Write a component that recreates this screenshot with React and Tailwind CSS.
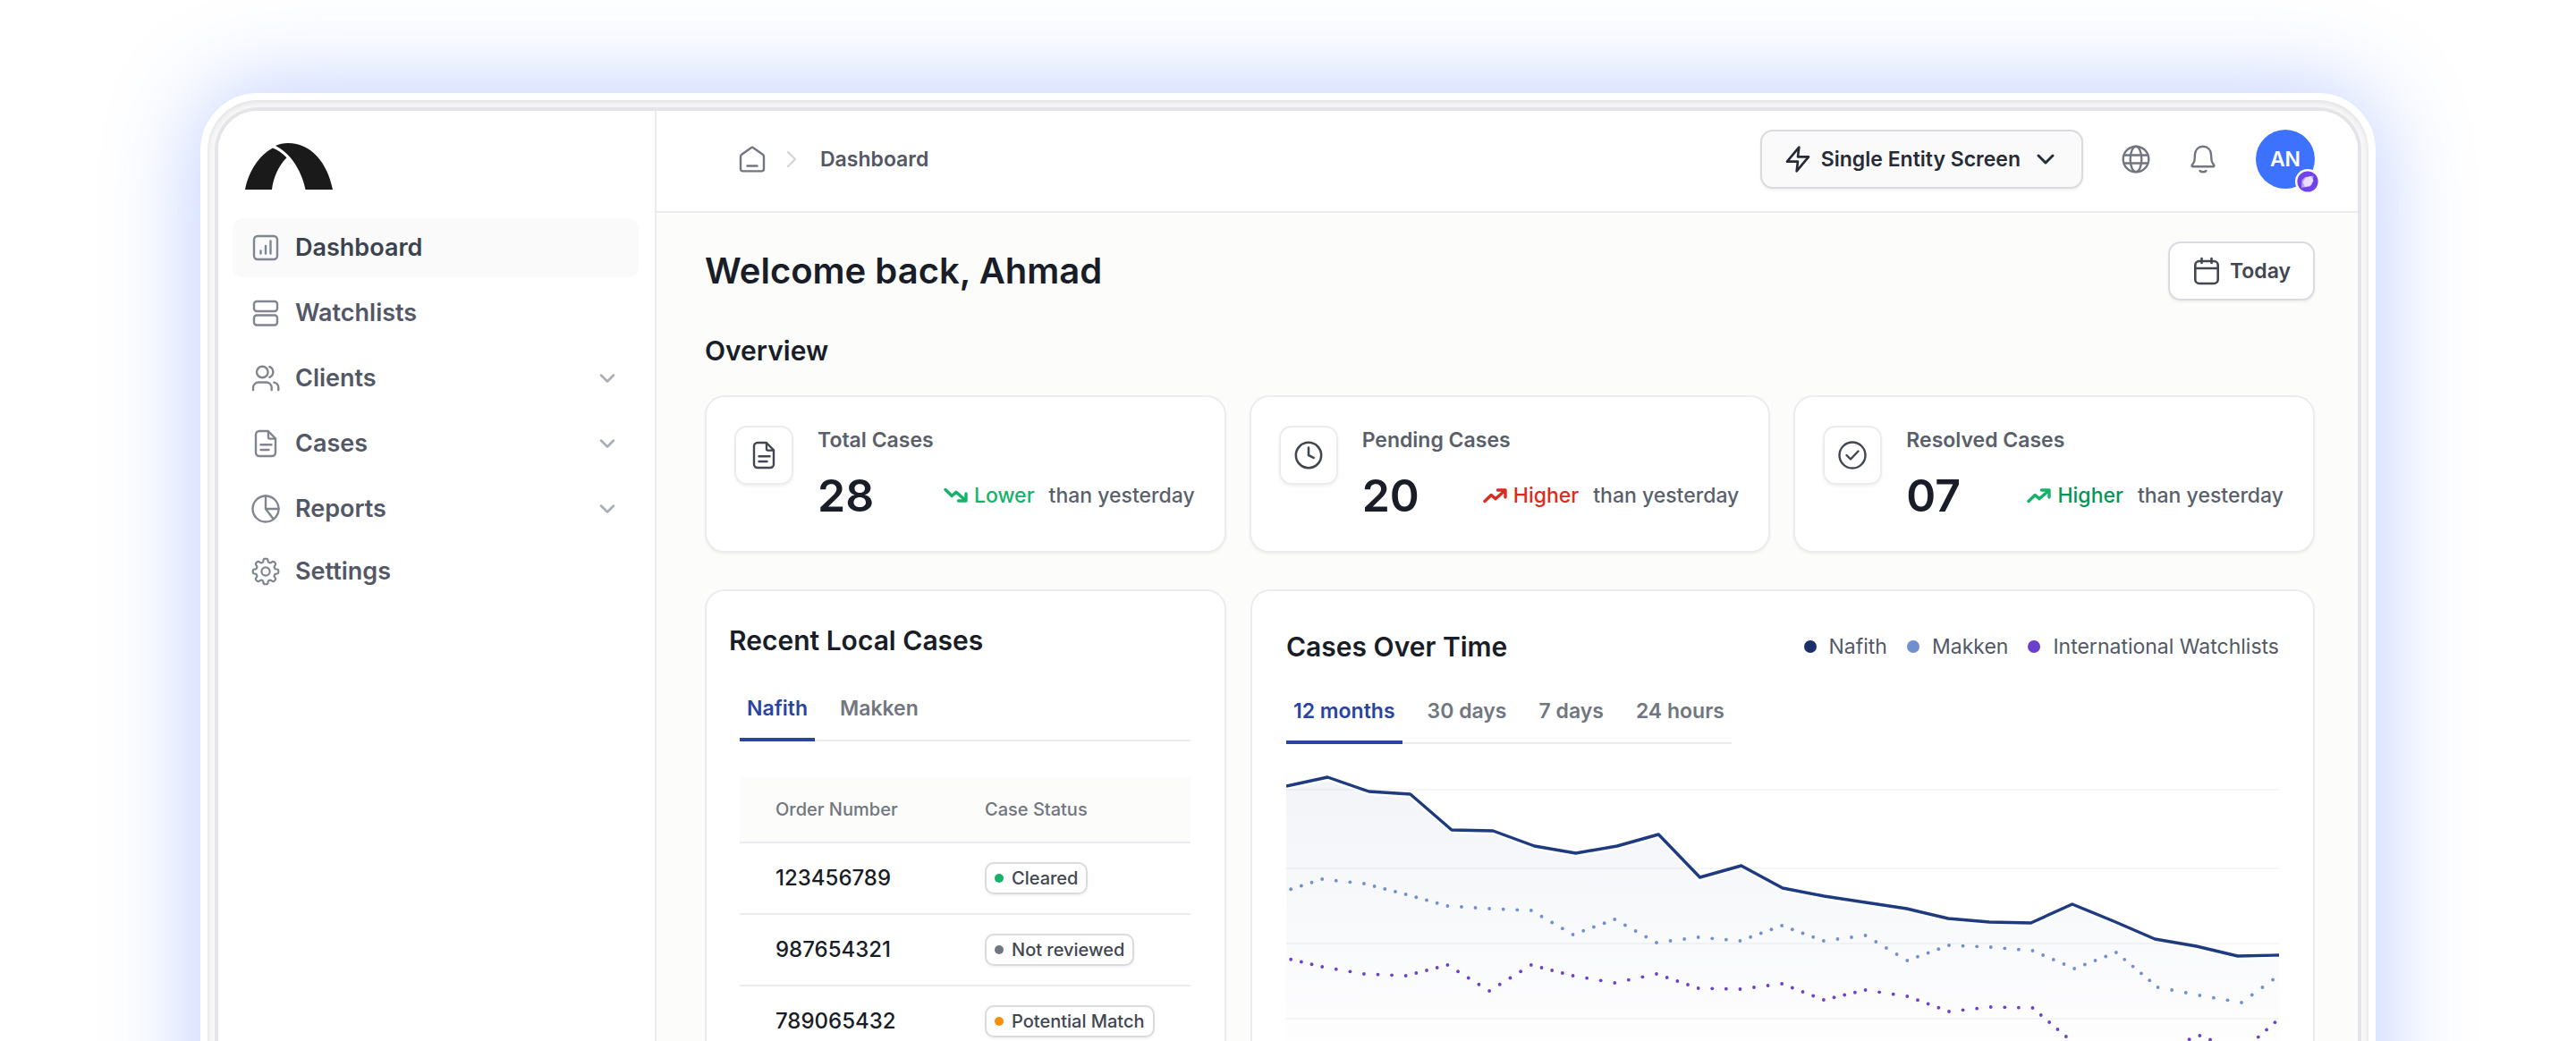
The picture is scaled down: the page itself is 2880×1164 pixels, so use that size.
import React, { useState } from 'react';
import { FiChevronDown, FiChevronRight, FiClock, FiZap } from 'react-icons/fi';

const Icon = ({ children, className = 'size-8', strokeWidth = 2.4, viewBox = '0 0 32 32' }) => (
  <svg
    viewBox={viewBox}
    fill="none"
    stroke="currentColor"
    strokeWidth={strokeWidth}
    strokeLinecap="round"
    strokeLinejoin="round"
    className={`shrink-0 ${className}`}
    aria-hidden="true"
  >
    {children}
  </svg>
);

const DashboardIcon = () => (
  <Icon>
    <rect x="3" y="3" width="26" height="26" rx="4" />
    <path d="M10.5 19.5v3M16 14v8.500M21.500 8.500v14" />
  </Icon>
);

const WatchlistsIcon = () => (
  <Icon>
    <rect x="3" y="3" width="26" height="11" rx="3" />
    <rect x="3" y="18.500" width="26" height="11" rx="3" />
  </Icon>
);

const ClientsIcon = () => (
  <Icon>
    <circle cx="12.300" cy="9" r="6.300" />
    <path d="M2 29v-2.500a6 6 0 0 1 6-6h8.700a6 6 0 0 1 6 6V29M20.300 3.200a6.200 6.200 0 0 1 0 11.600M25.300 20.600a6 6 0 0 1 5 5.900V29" />
  </Icon>
);

const FileIcon = () => (
  <Icon>
    <path d="M18.800 2H9a4 4 0 0 0-4 4v20a4 4 0 0 0 4 4h14a4 4 0 0 0 4-4V10.400L18.800 2Z" />
    <path d="M19 2.500V9a1.600 1.600 0 0 0 1.600 1.600H27M10.500 17.300h12M10.500 23h9" />
  </Icon>
);

const ReportsIcon = () => (
  <Icon>
    <circle cx="16" cy="16" r="14.500" />
    <path d="M16 1.500V16h14.500M16 16l8.800 11.500" />
  </Icon>
);

// Eight rounded teeth traced around the centre
const gearPoints = Array.from({ length: 192 }, (_, i) => {
  const angle = (i / 192) * Math.PI * 2;
  const radius = 12.5 + 1.8 * Math.tanh(2.2 * Math.cos(8 * angle) + 0.2);
  return `${(16 + radius * Math.sin(angle)).toFixed(2)},${(16 - radius * Math.cos(angle)).toFixed(2)}`;
}).join(' ');

const SettingsIcon = () => (
  <Icon strokeWidth={2.2}>
    <polygon points={gearPoints} />
    <circle cx="16" cy="16" r="4.600" />
  </Icon>
);

const HomeIcon = () => (
  <Icon>
    <path d="M3 13.200c0-1 .4-1.900 1.200-2.500L14.800 3.300a2 2 0 0 1 2.400 0l10.600 7.400c.8.600 1.200 1.500 1.200 2.500V27a2.400 2.400 0 0 1-2.400 2.400H5.400A2.400 2.400 0 0 1 3 27V13.200Z" />
    <path d="M10.500 23.500h11" />
  </Icon>
);

const GlobeIcon = () => (
  <Icon>
    <circle cx="16" cy="16" r="14.300" />
    <ellipse cx="16" cy="16" rx="6.300" ry="14.300" />
    <path d="M3 11.500h26M3 20.500h26" />
  </Icon>
);

const BellIcon = () => (
  <Icon>
    <path d="M16 1.800c-5.200 0-8.600 3.700-9 8.700l-.5 6.500c-.1 1.400-.5 2.300-1.300 3.400l-1.400 2.100c-.5.800-.1 1.700.8 1.700h22.800c.9 0 1.300-.9.800-1.700l-1.400-2.100c-.8-1.100-1.200-2-1.300-3.400l-.5-6.500c-.4-5-3.800-8.700-9-8.700Z" />
    <path d="M12.500 29c1.800 1.600 5.200 1.600 7 0" />
  </Icon>
);

const CalendarIcon = () => (
  <Icon strokeWidth={2.6}>
    <rect x="3.300" y="5" width="25.400" height="25" rx="4.500" />
    <path d="M3.500 13h25M10.500 2v5M21.500 2v5" />
  </Icon>
);

const CheckIcon = () => (
  <Icon>
    <circle cx="16" cy="16" r="14.500" />
    <path d="m9.500 16 4.500 4.500 8.500-9" />
  </Icon>
);

const ClockIcon = () => <FiClock className="size-[34px]" strokeWidth={1.8} />;

const TrendUp = () => (
  <Icon viewBox="0 0 28 18" className="h-[18px] w-7" strokeWidth={3.4}>
    <path d="M2 15.500l7.200-7 4.800 4.300L24.500 3.500M16.500 3h8.500v8" />
  </Icon>
);

const TrendDown = () => (
  <Icon viewBox="0 0 28 18" className="h-[18px] w-7" strokeWidth={3.4}>
    <path d="M2 2.500l7.200 7L14 5.200l10.500 9.300M16.500 15h8.500V7" />
  </Icon>
);

const Logo = () => (
  <svg viewBox="0 0 98 52" className="h-[52px] w-[98px]" fill="#1a1a1a" role="img" aria-label="Logo">
    <path d="M34 3C38 1 43 0 48 0c26 0 44 22 50 52H67.500C64.500 37 58 25 50.500 16 45.500 10 40 6.300 34 3Z" />
    <path d="M31 5.500C15 14 4 32 0 52h30c1.500-13.500 7.500-26.500 16.500-35.700C42 11.500 37 8 31 5.500Z" />
  </svg>
);

const navItems = [
  { label: 'Dashboard', icon: DashboardIcon, active: true },
  { label: 'Watchlists', icon: WatchlistsIcon },
  { label: 'Clients', icon: ClientsIcon, expandable: true },
  { label: 'Cases', icon: FileIcon, expandable: true },
  { label: 'Reports', icon: ReportsIcon, expandable: true },
];

const NavItem = ({ label, icon: ItemIcon, active, expandable }) => (
  <a
    href="#"
    className={`flex h-[66px] items-center gap-[17px] rounded-xl px-[21px] text-[27px] leading-10 font-semibold ${
      active ? 'bg-[#fafafa] text-[#3b4250]' : 'text-[#525866]'
    }`}
  >
    <span className="text-[#808590]">
      <ItemIcon />
    </span>
    <span className="flex-1">{label}</span>
    {expandable && <FiChevronDown className="size-7 text-[#a9adb5]" strokeWidth={2.2} />}
  </a>
);

const Sidebar = () => (
  <aside className="w-[490px] shrink-0 border-r-2 border-[#ececee] bg-white pt-9">
    <div className="pl-[30px]">
      <Logo />
    </div>
    <nav className="mt-8 pr-[18px] pl-4">
      <div className="flex flex-col gap-[7px]">
        {navItems.map((item) => (
          <NavItem key={item.label} {...item} />
        ))}
      </div>
      <div className="mt-1">
        <NavItem label="Settings" icon={SettingsIcon} />
      </div>
    </nav>
  </aside>
);

const Header = () => (
  <header className="flex items-center justify-between border-b-2 border-[#ececee] bg-white pt-[21px] pr-12 pb-[25px] pl-[91px]">
    <nav className="flex items-center" aria-label="Breadcrumb">
      <a href="#" className="text-[#717680]" aria-label="Home">
        <HomeIcon />
      </a>
      <FiChevronRight className="mr-4 ml-3 size-8 text-[#d3d5da]" strokeWidth={1.8} />
      <span className="text-[23px] leading-8 font-semibold text-[#525866]">Dashboard</span>
    </nav>
    <div className="flex items-center gap-[43px]">
      <button className="flex h-[66px] items-center rounded-[14px] border-2 border-[#dadbde] bg-[#fafafa] px-6 text-[23px] leading-8 font-semibold text-[#252b37] shadow-[0_2px_3px_rgba(10,13,18,0.06)]">
        <FiZap className="mr-[10px] size-8" />
        Single Entity Screen
        <FiChevronDown className="ml-3 size-8" strokeWidth={2.2} />
      </button>
      <button className="text-[#717680]" aria-label="Language">
        <GlobeIcon />
      </button>
      <button className="text-[#717680]" aria-label="Notifications">
        <BellIcon />
      </button>
      <div className="relative flex size-[66px] items-center justify-center rounded-full bg-[#3d72ff] text-[23px] leading-8 font-semibold text-white">
        AN
        <svg viewBox="0 0 28 28" className="absolute -right-[6px] -bottom-[6px] size-7" aria-hidden="true">
          <circle cx="14" cy="14" r="14" fill="#fff" />
          <circle cx="14" cy="14" r="11.600" fill="#7042ee" />
          <path d="M7.500 12.500 11 9l9.500-1.500L19 17l-2.500 2.500L7 21Z" fill="#b89df8" />
          <path d="M8.500 15 12 9.500l6-1.500 2.500 5-3.500 5.500-6 1.500Z" fill="#efe8ff" opacity="0.9" />
        </svg>
      </div>
    </div>
  </header>
);

const stats = [
  { label: 'Total Cases', value: '28', icon: FileIcon, trend: 'Lower', trendIcon: TrendDown, iconColor: 'text-[#17b26a]', color: 'text-[#17b26a]' },
  { label: 'Pending Cases', value: '20', icon: ClockIcon, trend: 'Higher', trendIcon: TrendUp, iconColor: 'text-[#d92d20]', color: 'text-[#d92d20]' },
  { label: 'Resolved Cases', value: '07', icon: CheckIcon, trend: 'Higher', trendIcon: TrendUp, iconColor: 'text-[#17b26a]', color: 'text-[#079455]' },
];

const StatCard = ({ label, value, icon: StatIcon, trend, trendIcon: TrendIcon, iconColor, color }) => (
  <div className="flex items-start gap-[27px] rounded-[22px] border-2 border-[#ececee] bg-white py-8 pr-[33px] pl-[31px] shadow-[0_2px_3px_rgba(10,13,18,0.05)]">
    <div className="flex size-[66px] shrink-0 items-center justify-center rounded-[14px] border-2 border-[#ececee] text-[#414651] shadow-[0_2px_3px_rgba(10,13,18,0.06)]">
      <StatIcon />
    </div>
    <div className="flex-1">
      <p className="text-[23px] leading-8 font-semibold text-[#5a5f6c]">{label}</p>
      <div className="mt-4 flex items-center justify-between">
        <span className="text-[50px] leading-[60px] font-semibold text-[#181d27]">{value}</span>
        <p className="flex items-center text-[23px] leading-8 font-medium text-[#5a5f6c]">
          <span className={`mr-[6px] ${iconColor}`}>
            <TrendIcon />
          </span>
          <span className={`mr-4 ${color}`}>{trend}</span>
          than yesterday
        </p>
      </div>
    </div>
  </div>
);

const Tabs = ({ items, className = '' }) => {
  const [selected, setSelected] = useState(items[0]);
  return (
    <div role="tablist" className={`flex gap-5 shadow-[inset_0_-2px_0_#ececee] ${className}`}>
      {items.map((item) => (
        <button
          key={item}
          role="tab"
          aria-selected={item === selected}
          onClick={() => setSelected(item)}
          className={`border-b-4 px-2 pb-[17px] text-[23px] leading-8 font-semibold ${
            item === selected ? 'border-[#2945a0] text-[#2945a0]' : 'border-transparent text-[#717680]'
          }`}
        >
          {item}
        </button>
      ))}
    </div>
  );
};

const cases = [
  { order: '123456789', status: 'Cleared', dot: 'bg-[#17b26a]' },
  { order: '987654321', status: 'Not reviewed', dot: 'bg-[#717680]' },
  { order: '789065432', status: 'Potential Match', dot: 'bg-[#f79009]' },
];

const RecentCases = () => (
  <section className="rounded-[22px] border-2 border-[#ececee] bg-white pt-[35px] pr-[38px] pb-12 pl-[25px]">
    <h2 className="text-[30px] leading-10 font-semibold text-[#181d27]">Recent Local Cases</h2>
    <div className="mt-10 ml-3">
      <Tabs items={['Nafith', 'Makken']} />
      <table className="mt-10 w-full table-fixed border-collapse text-left">
        <thead>
          <tr className="h-[73px] border-b-2 border-[#ececee] bg-[#fcfcfb] text-[20px] leading-7 text-[#717680]">
            <th className="w-[274px] pl-10 font-medium">Order Number</th>
            <th className="font-medium">Case Status</th>
          </tr>
        </thead>
        <tbody>
          {cases.map(({ order, status, dot }) => (
            <tr key={order} className="h-20 border-b-2 border-[#ececee]">
              <td className="pl-10 text-[24px] leading-8 font-medium text-[#181d27]">{order}</td>
              <td>
                <span className="inline-flex h-9 items-center gap-[9px] rounded-[10px] border-2 border-[#dadbde] px-[9px] align-middle text-[20px] leading-7 font-medium text-[#414651] shadow-[0_2px_3px_rgba(10,13,18,0.05)]">
                  <span className={`size-[10px] rounded-full ${dot}`} />
                  {status}
                </span>
              </td>
            </tr>
          ))}
        </tbody>
      </table>
    </div>
  </section>
);

const CHART_WIDTH = 1110;
const CHART_HEIGHT = 420;

const series = {
  nafith: [39, 29, 45, 48, 88, 89, 106, 114, 106, 93, 141, 128, 153, 162, 169, 176, 187, 191, 192, 171, 190, 210, 218, 229, 228],
  makken: [158, 143, 148, 160, 173, 176, 178, 205, 188, 214, 208, 212, 195, 212, 206, 234, 217, 219, 223, 243, 225, 264, 273, 281, 247],
  watchlists: [230, 241, 249, 251, 239, 268, 239, 251, 259, 249, 265, 266, 260, 278, 267, 274, 291, 286, 287, 327, 341, 335, 318, 336, 295],
};

const toDots = (values) => {
  const step = 46.72;
  const start = -6.5;
  const dots = [];
  values.slice(0, -1).forEach((y, i) => {
    const dy = values[i + 1] - y;
    const count = Math.floor(Math.hypot(step, dy) / 11.95);
    for (let k = 0; k < count; k += 1) {
      dots.push([start + step * (i + k / count), y + (dy * k) / count]);
    }
  });
  return dots.filter(([x]) => x > 0 && x < CHART_WIDTH);
};

const Chart = () => {
  const line = series.nafith.map((y, i) => `${(i * CHART_WIDTH) / 24},${y}`).join(' ');
  return (
    <svg viewBox={`0 0 ${CHART_WIDTH} ${CHART_HEIGHT}`} className="mt-2 w-full" role="img" aria-label="Cases over time">
      <defs>
        <linearGradient id="area" x1="0" y1="28" x2="0" y2="335" gradientUnits="userSpaceOnUse">
          <stop offset="0" stopColor="#1e3a80" stopOpacity="0.055" />
          <stop offset="1" stopColor="#1e3a80" stopOpacity="0.005" />
        </linearGradient>
      </defs>
      <polygon points={`0,${CHART_HEIGHT} ${line} ${CHART_WIDTH},${CHART_HEIGHT}`} fill="url(#area)" />
      <polyline points={line} fill="none" stroke="#fff" strokeWidth="8" />
      {[42, 130, 214, 298, 382].map((y) => (
        <rect key={y} y={y} width={CHART_WIDTH} height="2" fill="#0a0d12" opacity="0.04" />
      ))}
      <polyline points={line} fill="none" stroke="#1e3a80" strokeWidth="3.400" strokeLinejoin="round" />
      {toDots(series.makken).map(([x, y]) => (
        <circle key={x} cx={x} cy={y} r="1.900" fill="#6f8fce" />
      ))}
      {toDots(series.watchlists).map(([x, y]) => (
        <circle key={x} cx={x} cy={y} r="1.900" fill="#6b40cc" />
      ))}
    </svg>
  );
};

const legend = [
  { label: 'Nafith', color: 'bg-[#1b2f6b]' },
  { label: 'Makken', color: 'bg-[#6f8fce]' },
  { label: 'International Watchlists', color: 'bg-[#6b40cc]' },
];

const CasesOverTime = () => (
  <section className="rounded-[22px] border-2 border-[#ececee] bg-white px-[38px] pt-[42px] pb-12">
    <div className="flex items-center justify-between">
      <h2 className="text-[30px] leading-10 font-semibold text-[#181d27]">Cases Over Time</h2>
      <ul className="flex items-center gap-[22px] text-[23px] leading-8 text-[#525866]">
        {legend.map(({ label, color }) => (
          <li key={label} className="flex items-center gap-[14px]">
            <span className={`size-[14px] rounded-full ${color}`} />
            {label}
          </li>
        ))}
      </ul>
    </div>
    <Tabs items={['12 months', '30 days', '7 days', '24 hours']} className="mt-9 w-fit" />
    <Chart />
  </section>
);

const App = () => (
  <div className="h-screen overflow-hidden bg-white px-56 pt-[104px] font-[Inter,sans-serif]">
    <div className="rounded-t-[64px] bg-white px-2 pt-2 shadow-[0_0_104px_rgba(70,115,255,0.38)]">
      <div className="rounded-t-[56px] bg-[#f7f7f7] px-2 pt-2 shadow-[inset_0_2px_6px_rgba(0,0,0,0.1)]">
        <div className="flex overflow-hidden rounded-t-[48px] border-4 border-b-0 border-[#e4e4e9] bg-white">
          <Sidebar />
          <div className="min-w-0 flex-1 bg-[#fcfcfb]">
            <Header />
            <main className="pt-8 pr-12 pb-12 pl-[54px]">
              <div className="flex items-center justify-between">
                <h1 className="text-[40px] leading-[50px] font-semibold text-[#181d27]">Welcome back, Ahmad</h1>
                <button className="flex h-[66px] items-center gap-[10px] rounded-[14px] border-2 border-[#dadbde] bg-white px-[25px] text-[23px] leading-8 font-semibold text-[#414651] shadow-[0_2px_3px_rgba(10,13,18,0.06)]">
                  <CalendarIcon />
                  Today
                </button>
              </div>
              <h2 className="mt-9 text-[30px] leading-10 font-semibold text-[#181d27]">Overview</h2>
              <div className="mt-[30px] grid grid-cols-3 gap-[26px]">
                {stats.map((stat) => (
                  <StatCard key={stat.label} {...stat} />
                ))}
              </div>
              <div className="mt-[41px] grid grid-cols-[583fr_1190fr] gap-[27px]">
                <RecentCases />
                <CasesOverTime />
              </div>
            </main>
          </div>
        </div>
      </div>
    </div>
  </div>
);

export default App;
